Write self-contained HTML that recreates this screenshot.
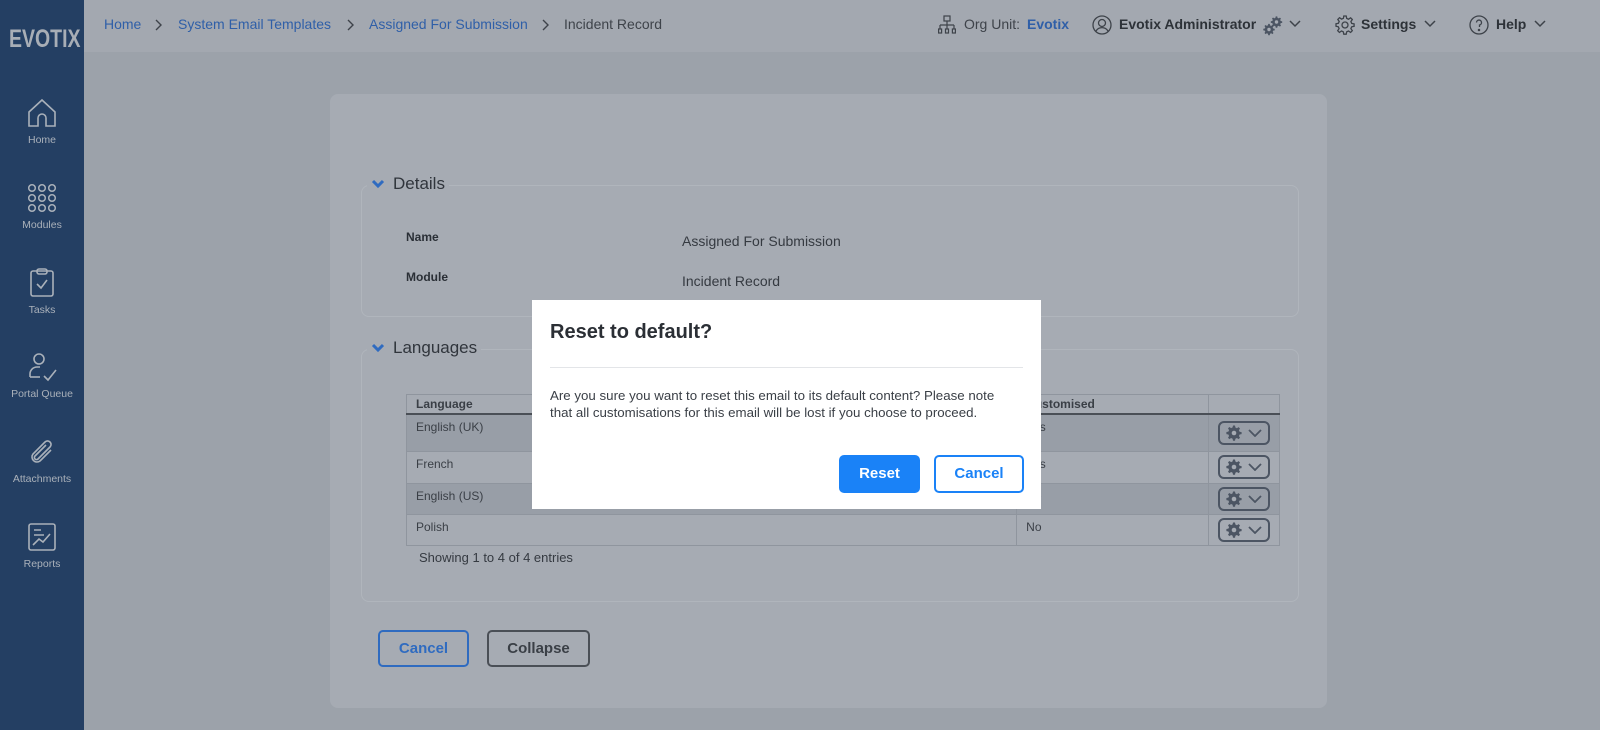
<!DOCTYPE html>
<html><head><meta charset="utf-8"><style>
*{box-sizing:border-box;margin:0;padding:0}
body{width:1600px;height:730px;overflow:hidden;background:#9ca2aa;font-family:"Liberation Sans",sans-serif;position:relative;color:#2a2f36}
.abs{position:absolute}
#side{left:0;top:0;width:84px;height:730px;background:#243f63}
.logo{left:9px;top:25px;font:bold 25px "Liberation Sans",sans-serif;color:#a8aeb6;transform:scaleX(.78);transform-origin:left;white-space:nowrap}
.nav{left:0;width:84px;text-align:center;color:#aab1ba;font-size:10.5px}
.nav svg{display:block;margin:0 auto 6px}
#hdr{left:84px;top:0;width:1516px;height:52px;background:#a3a8b0}
.bc{top:16px;font-size:14px;color:#2f5fa8}
.gr{color:#3e434a}
.card{left:330px;top:94px;width:997px;height:614px;background:#a6abb3;border-radius:8px}
.fs{border:1px solid #b0b5bc;border-radius:8px}
.leg{font-size:17px;color:#30353c;background:#a6abb3;padding:0 4px;display:flex;align-items:center;gap:8px}
table{border-collapse:collapse;font-size:12px;color:#3a3f46}
td{border:1px solid #8f959e;vertical-align:top;padding:5px 9px}
.btn{border-radius:5px;font-weight:bold;font-size:15px;text-align:center}
.gear{width:52px;height:24px;border:2px solid #4c5563;border-radius:6px;display:flex;align-items:center;justify-content:center;gap:6px}
</style></head><body>
<svg width="0" height="0" style="position:absolute"><defs>
<g id="g"><path d="M7 0.5h2l.4 2 1.5.7 1.7-1.1 1.4 1.4-1.1 1.7.7 1.5 2 .4v2l-2 .4-.7 1.5 1.1 1.7-1.4 1.4-1.7-1.1-1.5.7-.4 2H7l-.4-2-1.5-.7-1.7 1.1-1.4-1.4 1.1-1.7-.7-1.5-2-.4V7l2-.4.7-1.5L2 3.4 3.4 2l1.7 1.1 1.5-.7z" fill="#4c5563"/><circle cx="8" cy="8" r="2.3" fill="#a6abb3"/></g>
</defs></svg>
<div id="side" class="abs">
<div class="abs logo">EVOTIX</div>
<div class="abs nav" style="top:98px"><svg width="30" height="30" viewBox="0 0 30 30" fill="none" stroke="#aab1ba" stroke-width="1.6"><path d="M2 14L15 2L28 14V28H19V20A4 4 0 0 0 11 20V28H2Z"/></svg>Home</div>
<div class="abs nav" style="top:183px"><svg width="30" height="30" viewBox="0 0 30 30" fill="none" stroke="#aab1ba" stroke-width="1.5"><circle cx="5" cy="5" r="3.3"/><circle cx="15" cy="5" r="3.3"/><circle cx="25" cy="5" r="3.3"/><circle cx="5" cy="15" r="3.3"/><circle cx="15" cy="15" r="3.3"/><circle cx="25" cy="15" r="3.3"/><circle cx="5" cy="25" r="3.3"/><circle cx="15" cy="25" r="3.3"/><circle cx="25" cy="25" r="3.3"/></svg>Modules</div>
<div class="abs nav" style="top:268px"><svg width="30" height="30" viewBox="0 0 30 30" fill="none" stroke="#aab1ba" stroke-width="1.6"><rect x="4" y="3" width="22" height="25" rx="2"/><rect x="10" y="1" width="10" height="5" rx="2"/><path d="M10 16l4 4 6-8"/></svg>Tasks</div>
<div class="abs nav" style="top:352px"><svg width="30" height="30" viewBox="0 0 30 30" fill="none" stroke="#aab1ba" stroke-width="1.6"><circle cx="12" cy="7" r="5"/><path d="M3 25v-3a7 7 0 0 1 7-7h3M17 24l4 4 8-10"/><path d="M3 25h10"/></svg>Portal Queue</div>
<div class="abs nav" style="top:437px"><svg width="30" height="30" viewBox="0 0 30 30" fill="none" stroke="#aab1ba" stroke-width="1.6"><path d="M24 13L13 24a5 5 0 0 1-7-7L18 5a3.5 3.5 0 0 1 5 5L11 22a2 2 0 0 1-3-3L19 8"/></svg>Attachments</div>
<div class="abs nav" style="top:522px"><svg width="30" height="30" viewBox="0 0 30 30" fill="none" stroke="#aab1ba" stroke-width="1.6"><rect x="2" y="2" width="26" height="26" rx="2"/><path d="M7 8h7M7 13h10M6 23l6-6 4 3 7-8"/></svg>Reports</div>
</div>
<div id="hdr" class="abs"></div>
<div class="abs bc" style="left:104px">Home</div>
<svg class="abs" style="left:155px;top:19px" width="8" height="12" viewBox="0 0 8 12" fill="none" stroke="#3e434a" stroke-width="1.4"><path d="M1 1l5 5-5 5"/></svg>
<div class="abs bc" style="left:178px">System Email Templates</div>
<svg class="abs" style="left:347px;top:19px" width="8" height="12" viewBox="0 0 8 12" fill="none" stroke="#3e434a" stroke-width="1.4"><path d="M1 1l5 5-5 5"/></svg>
<div class="abs bc" style="left:369px">Assigned For Submission</div>
<svg class="abs" style="left:542px;top:19px" width="8" height="12" viewBox="0 0 8 12" fill="none" stroke="#3e434a" stroke-width="1.4"><path d="M1 1l5 5-5 5"/></svg>
<div class="abs bc gr" style="left:564px">Incident Record</div>
<svg class="abs" style="left:938px;top:15px" width="18" height="20" viewBox="0 0 18 20" fill="none" stroke="#3e434a" stroke-width="1.2"><rect x="6" y="1" width="6" height="5"/><path d="M9 6v4M2 10h14M2 10v4M9 10v4M16 10v4"/><rect x="0.6" y="14" width="3" height="4"/><rect x="7.5" y="14" width="3" height="4"/><rect x="14.4" y="14" width="3" height="4"/></svg>
<div class="abs bc gr" style="left:964px">Org Unit:</div>
<div class="abs bc" style="left:1027px;font-weight:bold">Evotix</div>
<svg class="abs" style="left:1092px;top:15px" width="20" height="20" viewBox="0 0 20 20" fill="none" stroke="#3e434a" stroke-width="1.3"><circle cx="10" cy="10" r="9"/><circle cx="10" cy="8" r="3.5"/><path d="M4 16a7 7 0 0 1 12 0"/></svg>
<div class="abs bc gr" style="left:1119px;font-weight:bold;color:#2d3238">Evotix Administrator</div>
<svg class="abs" style="left:1263px;top:16px" width="20" height="20" viewBox="0 0 16 16"><g transform="translate(0 6) scale(.6)"><use href="#g"/></g><g transform="translate(6 0) scale(.6)"><use href="#g"/></g></svg>
<svg class="abs" style="left:1289px;top:20px" width="12" height="8" viewBox="0 0 12 8" fill="none" stroke="#3e434a" stroke-width="1.5"><path d="M1 1l5 5 5-5"/></svg>
<svg class="abs" style="left:1335px;top:15px" width="20" height="20" viewBox="0 0 20 20" fill="none" stroke="#3e434a" stroke-width="1.3"><path d="M8.8 1h2.4l.5 2.4 1.8.8 2.1-1.4 1.7 1.7-1.4 2.1.8 1.8 2.4.5v2.4l-2.4.5-.8 1.8 1.4 2.1-1.7 1.7-2.1-1.4-1.8.8-.5 2.4H8.8l-.5-2.4-1.8-.8-2.1 1.4-1.7-1.7 1.4-2.1-.8-1.8L1 11.2V8.8l2.4-.5.8-1.8-1.4-2.1 1.7-1.7 2.1 1.4 1.8-.8z"/><circle cx="10" cy="10" r="3"/></svg>
<div class="abs bc" style="left:1361px;font-weight:bold;color:#2d3238">Settings</div>
<svg class="abs" style="left:1424px;top:20px" width="12" height="8" viewBox="0 0 12 8" fill="none" stroke="#3e434a" stroke-width="1.5"><path d="M1 1l5 5 5-5"/></svg>
<svg class="abs" style="left:1469px;top:15px" width="20" height="20" viewBox="0 0 20 20" fill="none" stroke="#3e434a" stroke-width="1.3"><circle cx="10" cy="10" r="9"/><path d="M7.5 7.5a2.5 2.5 0 1 1 3 2.5v2"/><circle cx="10" cy="15" r=".6"/></svg>
<div class="abs bc" style="left:1496px;font-weight:bold;color:#2d3238">Help</div>
<svg class="abs" style="left:1534px;top:20px" width="12" height="8" viewBox="0 0 12 8" fill="none" stroke="#3e434a" stroke-width="1.5"><path d="M1 1l5 5 5-5"/></svg>

<div class="abs card"></div>
<div class="abs fs" style="left:361px;top:185px;width:938px;height:132px"></div>
<div class="abs leg" style="left:367px;top:174px"><svg width="14" height="10" viewBox="0 0 14 10" fill="none" stroke="#2f6bc0" stroke-width="3"><path d="M2 2l5 5 5-5"/></svg>Details</div>
<div class="abs" style="left:406px;top:230px;font-size:12px;font-weight:bold">Name</div>
<div class="abs" style="left:682px;top:233px;font-size:14px;color:#353a41">Assigned For Submission</div>
<div class="abs" style="left:406px;top:270px;font-size:12px;font-weight:bold">Module</div>
<div class="abs" style="left:682px;top:273px;font-size:14px;color:#353a41">Incident Record</div>
<div class="abs fs" style="left:361px;top:349px;width:938px;height:253px"></div>
<div class="abs leg" style="left:367px;top:338px"><svg width="14" height="10" viewBox="0 0 14 10" fill="none" stroke="#2f6bc0" stroke-width="3"><path d="M2 2l5 5 5-5"/></svg>Languages</div>
<table class="abs" style="left:406px;top:394px;width:874px">
<tr style="height:17px;border-bottom:2px solid #4a4f56"><td style="width:611px;padding:2px 9px;font-weight:bold">Language</td><td style="width:192px;padding:2px 9px;font-weight:bold">Customised</td><td></td></tr>
<tr style="height:35px;background:#989ea7"><td>English (UK)</td><td>Yes</td><td style="padding:6px 9px"><div class="gear"><svg width="16" height="16"><use href="#g"/></svg><svg width="14" height="8" viewBox="0 0 14 8" fill="none" stroke="#4c5563" stroke-width="1.8"><path d="M1 1l6 6 6-6"/></svg></div></td></tr>
<tr style="height:32px"><td>French</td><td>Yes</td><td style="padding:3px 9px"><div class="gear"><svg width="16" height="16"><use href="#g"/></svg><svg width="14" height="8" viewBox="0 0 14 8" fill="none" stroke="#4c5563" stroke-width="1.8"><path d="M1 1l6 6 6-6"/></svg></div></td></tr>
<tr style="height:31px;background:#989ea7"><td>English (US)</td><td>No</td><td style="padding:3px 9px"><div class="gear"><svg width="16" height="16"><use href="#g"/></svg><svg width="14" height="8" viewBox="0 0 14 8" fill="none" stroke="#4c5563" stroke-width="1.8"><path d="M1 1l6 6 6-6"/></svg></div></td></tr>
<tr style="height:31px"><td>Polish</td><td>No</td><td style="padding:3px 9px"><div class="gear"><svg width="16" height="16"><use href="#g"/></svg><svg width="14" height="8" viewBox="0 0 14 8" fill="none" stroke="#4c5563" stroke-width="1.8"><path d="M1 1l6 6 6-6"/></svg></div></td></tr>
</table>
<div class="abs" style="left:419px;top:550px;font-size:13px;color:#353a41">Showing 1 to 4 of 4 entries</div>
<div class="abs btn" style="left:378px;top:630px;width:91px;height:37px;border:2px solid #2f6bc0;color:#2f6bc0;line-height:33px">Cancel</div>
<div class="abs btn" style="left:487px;top:630px;width:103px;height:37px;border:2px solid #4a4f56;color:#3a3f46;line-height:33px">Collapse</div>

<div class="abs" style="left:532px;top:300px;width:509px;height:209px;background:#fff"></div>
<div class="abs" style="left:550px;top:321px;font-size:20px;font-weight:bold;color:#2b2f35">Reset to default?</div>
<div class="abs" style="left:550px;top:367px;width:473px;height:1px;background:#e3e5e8"></div>
<div class="abs" style="left:550px;top:387px;width:466px;font-size:13.3px;line-height:17px;color:#3a3f46">Are you sure you want to reset this email to its default content? Please note that all customisations for this email will be lost if you choose to proceed.</div>
<div class="abs btn" style="left:839px;top:455px;width:81px;height:38px;background:#1a82f7;color:#fff;line-height:38px">Reset</div>
<div class="abs btn" style="left:934px;top:455px;width:90px;height:38px;border:2px solid #1a82f7;color:#1a82f7;line-height:34px">Cancel</div>
</body></html>
